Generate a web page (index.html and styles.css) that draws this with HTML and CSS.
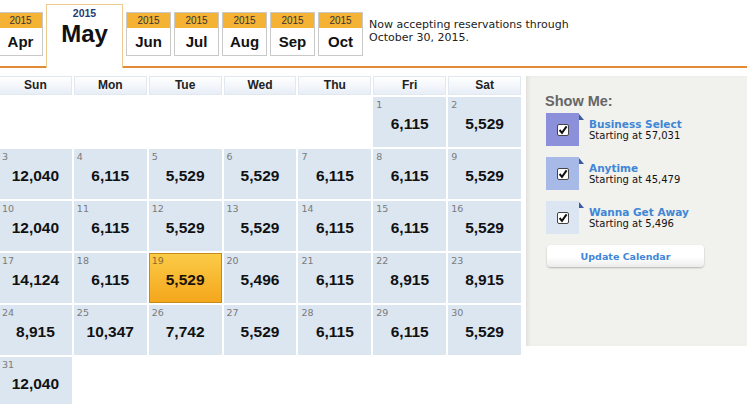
FILE: index.html
```html
<!DOCTYPE html>
<html lang="en">
<head>
    <meta charset="UTF-8">
    <title>Low Fare Calendar</title>
    <link rel="stylesheet" href="styles.css">
</head>
<body>
    <div class="tabs">
        <div class="tab"><div class="tab-year">2015</div><div class="tab-month">Apr</div></div>
        <div class="tab tab-current"><div class="tab-year">2015</div><div class="tab-month">May</div></div>
        <div class="tab"><div class="tab-year">2015</div><div class="tab-month">Jun</div></div>
        <div class="tab"><div class="tab-year">2015</div><div class="tab-month">Jul</div></div>
        <div class="tab"><div class="tab-year">2015</div><div class="tab-month">Aug</div></div>
        <div class="tab"><div class="tab-year">2015</div><div class="tab-month">Sep</div></div>
        <div class="tab"><div class="tab-year">2015</div><div class="tab-month">Oct</div></div>
        <p class="notice">Now accepting reservations through<br>October 30, 2015.</p>
    </div>

    <div class="main">
        <div class="calendar">
            <div class="dow">Sun</div>
            <div class="dow">Mon</div>
            <div class="dow">Tue</div>
            <div class="dow">Wed</div>
            <div class="dow">Thu</div>
            <div class="dow">Fri</div>
            <div class="dow">Sat</div>

            <div class="blank"></div>
            <div class="blank"></div>
            <div class="blank"></div>
            <div class="blank"></div>
            <div class="blank"></div>
            <div class="day"><span class="date">1</span><span class="price">6,115</span></div>
            <div class="day"><span class="date">2</span><span class="price">5,529</span></div>

            <div class="day"><span class="date">3</span><span class="price">12,040</span></div>
            <div class="day"><span class="date">4</span><span class="price">6,115</span></div>
            <div class="day"><span class="date">5</span><span class="price">5,529</span></div>
            <div class="day"><span class="date">6</span><span class="price">5,529</span></div>
            <div class="day"><span class="date">7</span><span class="price">6,115</span></div>
            <div class="day"><span class="date">8</span><span class="price">6,115</span></div>
            <div class="day"><span class="date">9</span><span class="price">5,529</span></div>

            <div class="day"><span class="date">10</span><span class="price">12,040</span></div>
            <div class="day"><span class="date">11</span><span class="price">6,115</span></div>
            <div class="day"><span class="date">12</span><span class="price">5,529</span></div>
            <div class="day"><span class="date">13</span><span class="price">5,529</span></div>
            <div class="day"><span class="date">14</span><span class="price">6,115</span></div>
            <div class="day"><span class="date">15</span><span class="price">6,115</span></div>
            <div class="day"><span class="date">16</span><span class="price">5,529</span></div>

            <div class="day"><span class="date">17</span><span class="price">14,124</span></div>
            <div class="day"><span class="date">18</span><span class="price">6,115</span></div>
            <div class="day day-selected"><span class="date">19</span><span class="price">5,529</span></div>
            <div class="day"><span class="date">20</span><span class="price">5,496</span></div>
            <div class="day"><span class="date">21</span><span class="price">6,115</span></div>
            <div class="day"><span class="date">22</span><span class="price">8,915</span></div>
            <div class="day"><span class="date">23</span><span class="price">8,915</span></div>

            <div class="day"><span class="date">24</span><span class="price">8,915</span></div>
            <div class="day"><span class="date">25</span><span class="price">10,347</span></div>
            <div class="day"><span class="date">26</span><span class="price">7,742</span></div>
            <div class="day"><span class="date">27</span><span class="price">5,529</span></div>
            <div class="day"><span class="date">28</span><span class="price">6,115</span></div>
            <div class="day"><span class="date">29</span><span class="price">6,115</span></div>
            <div class="day"><span class="date">30</span><span class="price">5,529</span></div>

            <div class="day"><span class="date">31</span><span class="price">12,040</span></div>
        </div>

        <aside class="panel">
            <h4 class="panel-title">Show Me:</h4>
            <div class="fare">
                <div class="fare-box fare-business"><span class="check"><svg width="10" height="10" viewBox="0 0 10 10"><path d="M1.6 5 L4 7.8 L8.6 1.4" fill="none" stroke="#111" stroke-width="2"/></svg></span></div>
                <div class="fare-text">
                    <div class="fare-name">Business Select</div>
                    <div class="fare-from">Starting at 57,031</div>
                </div>
            </div>
            <div class="fare">
                <div class="fare-box fare-anytime"><span class="check"><svg width="10" height="10" viewBox="0 0 10 10"><path d="M1.6 5 L4 7.8 L8.6 1.4" fill="none" stroke="#111" stroke-width="2"/></svg></span></div>
                <div class="fare-text">
                    <div class="fare-name">Anytime</div>
                    <div class="fare-from">Starting at 45,479</div>
                </div>
            </div>
            <div class="fare">
                <div class="fare-box fare-wanna"><span class="check"><svg width="10" height="10" viewBox="0 0 10 10"><path d="M1.6 5 L4 7.8 L8.6 1.4" fill="none" stroke="#111" stroke-width="2"/></svg></span></div>
                <div class="fare-text">
                    <div class="fare-name">Wanna Get Away</div>
                    <div class="fare-from">Starting at 5,496</div>
                </div>
            </div>
            <button class="update">Update Calendar</button>
        </aside>
    </div>
</body>
</html>
```

FILE: styles.css
```css
body {
    margin: 0;
    width: 747px;
    height: 404px;
    overflow: hidden;
    background: #ffffff;
    color: #111;
    font-family: 'Liberation Sans', Arial, sans-serif;
}
.tabs {
    display: flex;
    align-items: flex-start;
    gap: 3px;
    height: 66px;
    margin-left: -2px;
    border-bottom: 2px solid #e38b34;
}
.tab {
    box-sizing: border-box;
    width: 45px;
    height: 44px;
    margin-top: 12px;
    border: 1px solid #c9c9c9;
    background: #fff;
    text-align: center;
    flex-shrink: 0;
}
.tab-year {
    height: 15px;
    line-height: 15px;
    font-size: 10px;
    background: #f5b335;
    color: #333;
}
.tab-month {
    font-size: 15px;
    font-weight: bold;
    line-height: 27px;
}
.tab-current {
    width: 77px;
    height: 64px;
    margin-top: 4px;
    border-color: #ebcb8f;
    border-bottom: none;
}
.tab-current .tab-year {
    background: none;
    color: #1f3d73;
    font-weight: bold;
    font-size: 10.5px;
    height: auto;
    line-height: 13px;
    padding-top: 2px;
}
.tab-current .tab-month {
    font-size: 24px;
    line-height: 28px;
}
.notice {
    margin: 18px 0 0 3px;
    font-family: 'DejaVu Sans', Verdana, sans-serif;
    font-size: 11px;
    line-height: 13px;
    color: #222;
}
.main {
    display: flex;
    align-items: flex-start;
    gap: 5px;
    margin-left: -1px;
    padding-top: 8px;
}
.calendar {
    width: 522px;
    flex-shrink: 0;
    display: grid;
    grid-template-columns: repeat(7, 1fr);
    grid-template-rows: 19px;
    grid-auto-rows: 50px;
    gap: 2px;
}
.dow {
    box-sizing: border-box;
    border: 1px solid #e2e8f0;
    background: linear-gradient(#ffffff, #e8eef7);
    text-align: center;
    font-size: 12px;
    font-weight: bold;
    line-height: 17px;
    color: #222;
}
.day {
    background: #dce6f1;
    display: flex;
    flex-direction: column;
}
.date {
    padding: 2px 0 0 3px;
    font-family: 'DejaVu Sans', Verdana, sans-serif;
    font-size: 9.5px;
    line-height: 12px;
    color: #7a7a7a;
}
.price {
    margin-top: 3px;
    text-align: center;
    font-size: 15.5px;
    font-weight: bold;
    line-height: 20px;
    color: #111;
}
.day-selected {
    box-sizing: border-box;
    border: 1px solid #c48a1c;
    background: linear-gradient(#fbcb47, #f4a71c);
}
.day-selected .date {
    padding: 1px 0 0 2px;
    color: #8a6a35;
}
.day-selected .price {
    color: #1a1208;
}
.panel {
    flex: 1;
    height: 270px;
    box-sizing: border-box;
    padding: 17px 0 0 19px;
    background: #f1f1ed;
    box-shadow: inset 4px 0 4px -2px rgba(0, 0, 0, 0.08);
    font-family: 'DejaVu Sans', Verdana, sans-serif;
}
.panel-title {
    margin: 0 0 3px;
    font-family: 'Liberation Sans', Arial, sans-serif;
    font-size: 14.5px;
    line-height: 17px;
    color: #666;
}
.fare {
    display: flex;
    align-items: flex-start;
    gap: 10px;
    margin-bottom: 11px;
}
.fare-box {
    position: relative;
    width: 33px;
    height: 33px;
    margin-left: 1px;
    display: flex;
    align-items: center;
    justify-content: center;
}
.fare-box::after {
    content: "";
    position: absolute;
    left: 100%;
    top: 1px;
    width: 0;
    height: 0;
    border-left: 5px solid #3b5a9f;
    border-top: 6px solid transparent;
}
.fare-business {
    background: #8c8fd9;
}
.fare-anytime {
    background: #a7b9e7;
}
.fare-wanna {
    background: #dce5f2;
}
.check {
    box-sizing: border-box;
    width: 12px;
    height: 12px;
    border: 1px solid #444;
    border-radius: 2px;
    background: #fff;
    display: flex;
    align-items: center;
    justify-content: center;
}
.check svg {
    display: block;
}
.fare-text {
    padding-top: 5px;
}
.fare-name {
    font-size: 10.5px;
    font-weight: bold;
    line-height: 12px;
    color: #3f86d6;
}
.fare-from {
    font-size: 10px;
    line-height: 12px;
    color: #111;
}
.update {
    display: block;
    width: 157px;
    height: 22px;
    margin: 1px 0 0 2px;
    border: none;
    border-radius: 4px;
    background: linear-gradient(#ffffff 55%, #ececec);
    box-shadow: 0 1px 2px rgba(0, 0, 0, 0.25);
    font-family: 'DejaVu Sans', Verdana, sans-serif;
    font-size: 9.5px;
    font-weight: bold;
    color: #3f86d6;
    padding: 0;
}
```
